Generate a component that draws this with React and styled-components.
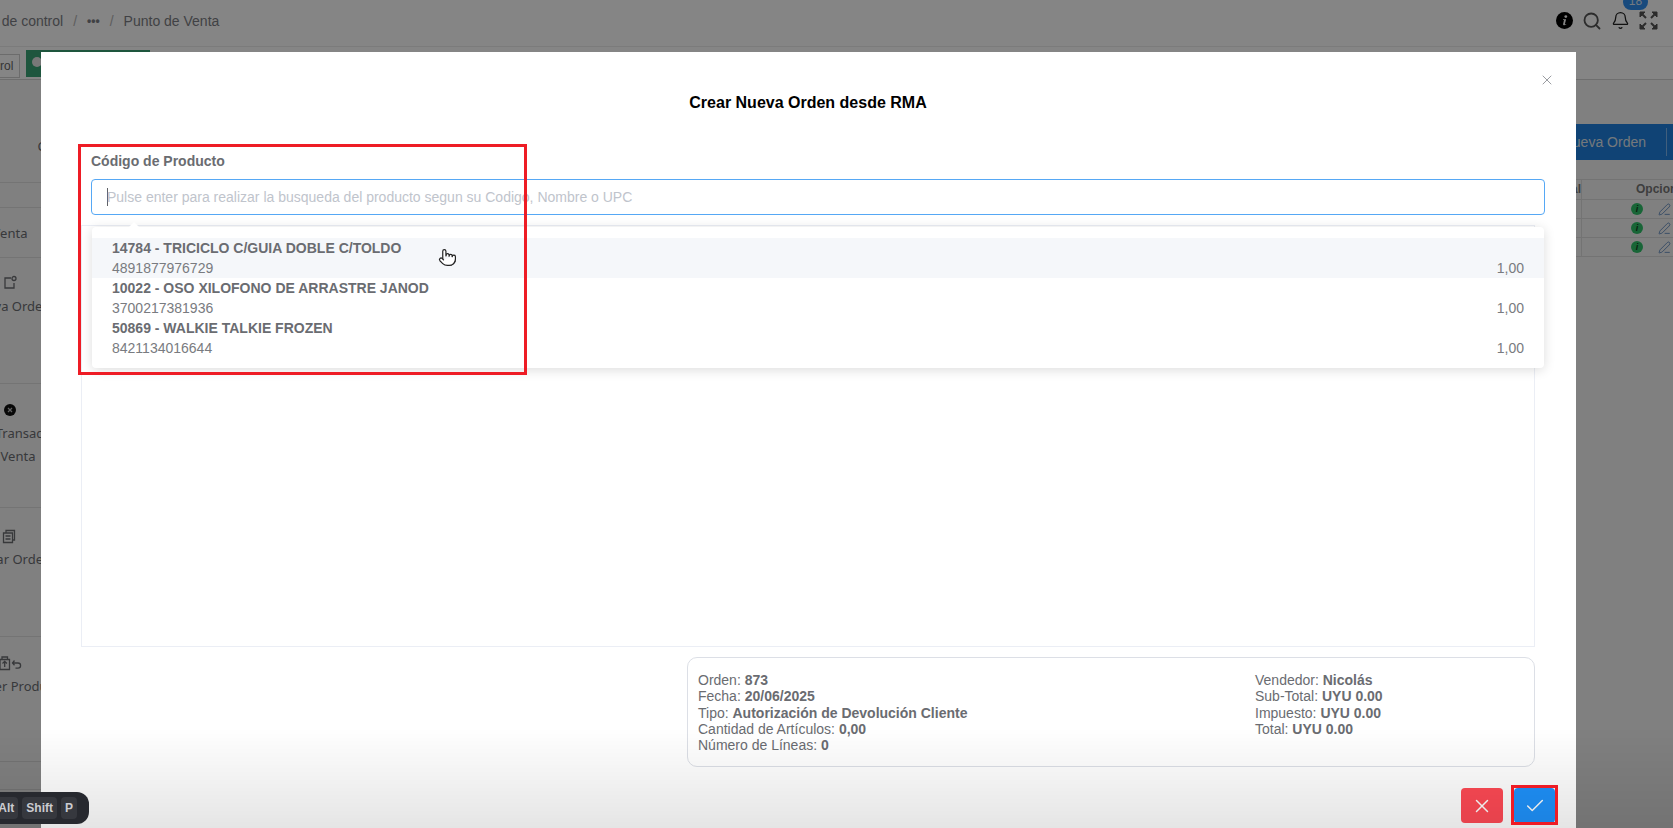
import React from "react"
import styled, { createGlobalStyle } from "styled-components"
import { Bell, Check, PenLine, Pointer, Search, X } from "lucide-react"

const GlobalStyle = createGlobalStyle`
  html, body {
    margin: 0;
    height: 100%;
    overflow: hidden;
  }
  body {
    font-family: "Liberation Sans", Arial, sans-serif;
    font-size: 14px;
    background: #f6f6f6;
  }
  * {
    box-sizing: border-box;
  }
`

const Page = styled.div`
  width: 1673px;
  height: 828px;
  display: flex;
  flex-direction: column;
  overflow: hidden;
  position: relative;
`

const Header = styled.header`
  height: 47px;
  flex: none;
  background: #fff;
  border-bottom: 1px solid #ececec;
  display: flex;
  align-items: center;
  justify-content: space-between;
  padding: 0 15px 5px 0;
`

const Breadcrumb = styled.nav`
  display: flex;
  align-items: center;
  gap: 10px;
  margin-left: -38px;
  color: #7c7e84;
`

const Slash = styled.span`
  color: #b4b4b4;
`

const Dots = styled.span`
  font-weight: 700;
  font-size: 12px;
`

const HeaderIcons = styled.div`
  display: flex;
  align-items: center;
  gap: 9px;
  color: #555;
  position: relative;
`

const Badge = styled.span`
  position: absolute;
  left: 67px;
  top: -17px;
  width: 25px;
  height: 16px;
  border-radius: 8px;
  background: #2f8ff0;
  color: #dce8f5;
  font-size: 12px;
  line-height: 14px;
  text-align: center;
`

const TabBar = styled.div`
  height: 33px;
  flex: none;
  background: #fff;
  border-bottom: 1px solid #d4d4d4;
  display: flex;
  align-items: flex-start;
  gap: 6px;
  padding-top: 3px;
`

const TabButton = styled.div`
  width: 20px;
  height: 24px;
  margin-top: 4px;
  border: 1px solid #d0d0d0;
  border-left: 0;
  color: #666;
  font-size: 12px;
  line-height: 22px;
  text-align: right;
  padding-right: 7px;
`

const GreenTab = styled.div`
  width: 124px;
  height: 27px;
  background: #3aa577;
  padding: 7px 0 0 6px;
`

const GreenDot = styled.span`
  display: block;
  width: 10px;
  height: 10px;
  border-radius: 50%;
  background: #e6e6e6;
`

const Main = styled.main`
  flex: 1;
  display: flex;
  min-height: 0;
`

const Sidebar = styled.aside`
  width: 120px;
  margin-left: -50px;
  flex: none;
  padding-top: 18px;
  color: #6b6d72;
  font-family: "Noto Sans", sans-serif;
  font-size: 13px;
`

const SideItem = styled.div`
  height: ${(p) => p.$height}px;
  padding-top: ${(p) => p.$top || 0}px;
  border-bottom: 1px solid #dedede;
  display: flex;
  flex-direction: column;
  align-items: center;
  text-align: center;
  white-space: nowrap;
  line-height: 23px;
`

const SideIcon = styled.svg`
  width: ${(p) => (p.$wide ? 24 : 16)}px;
  height: 16px;
  margin-bottom: 4px;
  flex: none;
`

const SideLabel = styled.span`
  margin-left: ${(p) => p.$shift || 0}px;
`

const Content = styled.section`
  flex: 1;
  display: flex;
  flex-direction: column;
  align-items: flex-end;
  padding-top: 44px;
`

const Toolbar = styled.div`
  width: 420px;
  height: 36px;
  background: #1f80e0;
  color: #dfe7ee;
  display: flex;
  align-items: center;
  justify-content: flex-end;
  gap: 20px;
  padding-right: 6px;
  font-size: 14px;
  border-radius: 2px 0 0 2px;
`

const ToolbarRule = styled.span`
  width: 1px;
  height: 28px;
  background: #7db6ef;
`

const Grid = styled.div`
  width: 400px;
  margin-top: 19px;
  margin-right: -8px;
  border-top: 1px solid #dcdcdc;
`

const GridRow = styled.div`
  height: ${(p) => (p.$head ? 20 : 19)}px;
  display: grid;
  grid-template-columns: 1fr 99px;
  border-bottom: 1px solid #dcdcdc;
  font-weight: 700;
  font-size: 12px;
  color: #777;
  line-height: 19px;
`

const GridCell = styled.div`
  border-right: ${(p) => (p.$rule ? "1px solid #dcdcdc" : "0")};
  display: flex;
  align-items: center;
  gap: 15px;
  padding-left: ${(p) => (p.$right ? 0 : p.$head ? 54 : 49)}px;
  justify-content: ${(p) => (p.$right ? "flex-end" : "flex-start")};
  white-space: nowrap;
`

const OkDot = styled.span`
  width: 12px;
  height: 12px;
  border-radius: 50%;
  background: #2fc26a;
  color: #14401f;
  font-size: 9px;
  font-style: italic;
  line-height: 12px;
  text-align: center;
`

const Overlay = styled.div`
  position: fixed;
  inset: 0;
  background: rgba(0, 0, 0, 0.48);
`

const Modal = styled.div`
  position: fixed;
  left: 41px;
  top: 52px;
  width: 1535px;
  height: 776px;
  background: #fff;
  padding: 41px 41px 0 40px;
  color: #6a6c71;
  display: flex;
  flex-direction: column;
`

const CloseButton = styled.span`
  position: absolute;
  right: 21px;
  top: 20px;
  color: #8a8c92;
  display: flex;
`

const Title = styled.h2`
  margin: 0;
  font-size: 16px;
  line-height: 20px;
  font-weight: 700;
  color: #000;
  text-align: center;
`

const Field = styled.div`
  margin: 38px -10px 0 10px;
`

const FieldLabel = styled.label`
  display: block;
  font-weight: 700;
  line-height: 20px;
  margin-bottom: 8px;
`

const InputWrap = styled.div`
  position: relative;
`

const Input = styled.div`
  height: 36px;
  border: 1px solid #56a8f5;
  border-radius: 4px;
  padding-left: 15px;
  line-height: 34px;
  color: #c0c4cc;
  white-space: nowrap;
`

const Caret = styled.span`
  display: inline-block;
  width: 1px;
  height: 18px;
  margin-right: -1px;
  background: #606266;
  vertical-align: -4px;
`

const Popup = styled.div`
  position: absolute;
  left: 1px;
  right: 1px;
  top: calc(100% + 12px);
  padding: 11px 0 10px;
  background: #fff;
  border-radius: 4px;
  box-shadow: 0 2px 12px rgba(0, 0, 0, 0.14);
  z-index: 2;

  &::before {
    content: "";
    position: absolute;
    left: 36px;
    top: -5px;
    border-left: 6px solid transparent;
    border-right: 6px solid transparent;
    border-bottom: 6px solid #fff;
  }
`

const Option = styled.div`
  height: 40px;
  padding: 0 20px;
  line-height: 20px;
  background: ${(p) => (p.$hover ? "#f5f7fa" : "transparent")};
`

const OptionName = styled.div`
  font-weight: 700;
`

const OptionLine = styled.div`
  display: flex;
  justify-content: space-between;
  color: #797b80;
`

const HandCursor = styled.span`
  position: absolute;
  left: 346px;
  top: 21px;
  display: flex;
  color: #222;
`

const LinesTable = styled.div`
  margin-top: 10px;
  height: 422px;
  flex: none;
  border: 1px solid #ebeef5;
`

const Summary = styled.div`
  margin: 10px 0 0 606px;
  height: 110px;
  flex: none;
  border: 1px solid #dcdfe6;
  border-radius: 10px;
  padding: 14px 10px;
  display: flex;
  line-height: 16.25px;
`

const SummaryLeft = styled.div`
  width: 557px;
`

const Footer = styled.footer`
  margin: 21px -20px 0 0;
  display: flex;
  justify-content: flex-end;
  gap: 11px;
`

const ActionButton = styled.button`
  width: ${(p) => (p.$danger ? 42 : 41)}px;
  height: 35px;
  border: 0;
  border-radius: 4px;
  padding: 0;
  color: #fff;
  background: ${(p) => (p.$danger ? "#ff4a55" : "#1f92fb")};
  display: flex;
  align-items: center;
  justify-content: center;
`

const Highlight = styled.div`
  position: fixed;
  left: ${(p) => p.$x}px;
  top: ${(p) => p.$y}px;
  width: ${(p) => p.$w}px;
  height: ${(p) => p.$h}px;
  border: 3px solid #ee1c25;
  pointer-events: none;
  z-index: 5;
`

const BottomShade = styled.div`
  position: fixed;
  left: 0;
  right: 0;
  bottom: 0;
  height: 100px;
  background: linear-gradient(to bottom, rgba(0, 0, 0, 0), rgba(0, 0, 0, 0.1));
  pointer-events: none;
  z-index: 4;
`

const Shortcut = styled.div`
  position: fixed;
  left: -14px;
  top: 792px;
  width: 103px;
  height: 32px;
  background: #27292f;
  border-radius: 12px;
  display: flex;
  align-items: center;
  justify-content: flex-end;
  gap: 4px;
  padding-right: 12px;
  z-index: 6;
`

const Key = styled.kbd`
  height: 22px;
  padding: 0 4px;
  border-radius: 4px;
  background: #36383e;
  color: #cbcbd0;
  font-family: "Liberation Sans", sans-serif;
  font-size: 12px;
  font-weight: 700;
  line-height: 22px;
`

const InfoIcon = () => (
  <svg width="17" height="17" viewBox="0 0 17 17">
    <circle cx="8.5" cy="8.5" r="8.5" fill="#000" />
    <circle cx="9.8" cy="4.6" r="1.4" fill="#fff" />
    <path d="M7 7.2h3.1L8.9 12c-.1.5.4.5 1.2 0l.2.5c-1.3 1-3.4 1.3-3.2-.4l.9-4.1H7z" fill="#fff" />
  </svg>
)

const ExpandIcon = () => (
  <svg width="19" height="19" viewBox="0 0 19 19" fill="#555" stroke="#555" strokeWidth="1">
    <path d="M1 1h5L1 6zM18 1h-5l5 5zM1 18h5l-5-5zM18 18h-5l5-5z" />
    <path d="M3 3l4 4M16 3l-4 4M3 16l4-4M16 16l-4-4" strokeWidth="2" />
  </svg>
)

const SIDE_STROKE = { fill: "none", stroke: "currentColor", strokeWidth: 1.3 }

const App = () => {
  const options = [
    ["14784 - TRICICLO C/GUIA DOBLE C/TOLDO", "4891877976729"],
    ["10022 - OSO XILOFONO DE ARRASTRE JANOD", "3700217381936"],
    ["50869 - WALKIE TALKIE FROZEN", "8421134016644"],
  ]

  return (
    <>
      <GlobalStyle />
      <Page>
        <Header>
          <Breadcrumb>
            <span>Panel de control</span>
            <Slash>/</Slash>
            <Dots>•••</Dots>
            <Slash>/</Slash>
            <span>Punto de Venta</span>
          </Breadcrumb>
          <HeaderIcons>
            <Badge>18</Badge>
            <InfoIcon />
            <Search size={20} strokeWidth={2.2} />
            <Bell size={19} strokeWidth={1.6} color="#222" />
            <ExpandIcon />
          </HeaderIcons>
        </Header>
        <TabBar>
          <TabButton>rol</TabButton>
          <GreenTab>
            <GreenDot />
          </GreenTab>
        </TabBar>
        <Main>
          <Sidebar>
            <SideItem $height={85} $top={37}>
              <SideLabel $shift={63}>C</SideLabel>
            </SideItem>
            <SideItem $height={25} />
            <SideItem $height={50} $top={14}>
              <SideLabel>Venta</SideLabel>
            </SideItem>
            <SideItem $height={126} $top={17}>
              <SideIcon viewBox="0 0 16 16" {...SIDE_STROKE}>
                <path d="M9 3H3v10h9V8" />
                <circle cx="12" cy="3.5" r="2" />
              </SideIcon>
              <SideLabel>Nueva Orden</SideLabel>
            </SideItem>
            <SideItem $height={124} $top={18}>
              <SideIcon viewBox="0 0 16 16">
                <circle cx="8" cy="8" r="6" fill="#111" />
                <path d="M6 6l4 4M10 6l-4 4" stroke="#bbb" strokeWidth="1.2" />
              </SideIcon>
              <SideLabel>Anular Transacción</SideLabel>
              <SideLabel $shift={16}>Venta</SideLabel>
            </SideItem>
            <SideItem $height={129} $top={20}>
              <SideIcon viewBox="0 0 16 16" {...SIDE_STROKE}>
                <path d="M1.5 5h9v9.5h-9zM4 5V2.5h8.5V12h-2M3.5 8h5M3.5 11h5" />
              </SideIcon>
              <SideLabel>Copiar Orden</SideLabel>
            </SideItem>
            <SideItem $height={125} $top={18}>
              <SideIcon $wide viewBox="0 0 24 16" {...SIDE_STROKE}>
                <path d="M2 4.5h9.5v10H2zM4 4.5V2h5.5v2.5M6.7 12V6.5M4.5 8.5l2.2-2.2 2.2 2.2" />
                <path d="M16.5 5.5L14.5 8l2 2.2M14.5 8H20a2.6 2.6 0 0 1 0 5.2h-2.5" />
              </SideIcon>
              <SideLabel>Devolver Producto</SideLabel>
            </SideItem>
            <SideItem $height={28} />
          </Sidebar>
          <Content>
            <Toolbar>
              <span>Nueva Orden</span>
              <ToolbarRule />
            </Toolbar>
            <Grid>
              <GridRow $head>
                <GridCell $rule $right>Total</GridCell>
                <GridCell $head>Opciones</GridCell>
              </GridRow>
              {[1, 2, 3].map((row) => (
                <GridRow key={row}>
                  <GridCell $rule />
                  <GridCell>
                    <OkDot>i</OkDot>
                    <PenLine size={13} strokeWidth={1.3} color="#3b6fb0" />
                  </GridCell>
                </GridRow>
              ))}
            </Grid>
          </Content>
        </Main>
        <Overlay />
        <Modal>
          <CloseButton>
            <X size={16} strokeWidth={1.3} />
          </CloseButton>
          <Title>Crear Nueva Orden desde RMA</Title>
          <Field>
            <FieldLabel>Código de Producto</FieldLabel>
            <InputWrap>
              <Input>
                <Caret />
                Pulse enter para realizar la busqueda del producto segun su Codigo, Nombre o UPC
              </Input>
              <Popup>
                {options.map(([name, code], i) => (
                  <Option key={code} $hover={i === 0}>
                    <OptionName>{name}</OptionName>
                    <OptionLine>
                      <span>{code}</span>
                      <span>1,00</span>
                    </OptionLine>
                  </Option>
                ))}
                <HandCursor>
                  <Pointer size={19} strokeWidth={1.5} fill="#fff" />
                </HandCursor>
              </Popup>
            </InputWrap>
          </Field>
          <LinesTable />
          <Summary>
            <SummaryLeft>
              <div>Orden: <b>873</b></div>
              <div>Fecha: <b>20/06/2025</b></div>
              <div>Tipo: <b>Autorización de Devolución Cliente</b></div>
              <div>Cantidad de Artículos: <b>0,00</b></div>
              <div>Número de Líneas: <b>0</b></div>
            </SummaryLeft>
            <div>
              <div>Vendedor: <b>Nicolás</b></div>
              <div>Sub-Total: <b>UYU 0.00</b></div>
              <div>Impuesto: <b>UYU 0.00</b></div>
              <div>Total: <b>UYU 0.00</b></div>
            </div>
          </Summary>
          <Footer>
            <ActionButton $danger>
              <X size={22} strokeWidth={1.6} />
            </ActionButton>
            <ActionButton>
              <Check size={22} strokeWidth={1.6} />
            </ActionButton>
          </Footer>
        </Modal>
        <BottomShade />
        <Highlight $x={78} $y={144} $w={449} $h={231} />
        <Highlight $x={1511} $y={785} $w={47} $h={40} />
        <Shortcut>
          <Key>Alt</Key>
          <Key>Shift</Key>
          <Key>P</Key>
        </Shortcut>
      </Page>
    </>
  )
}

export default App
